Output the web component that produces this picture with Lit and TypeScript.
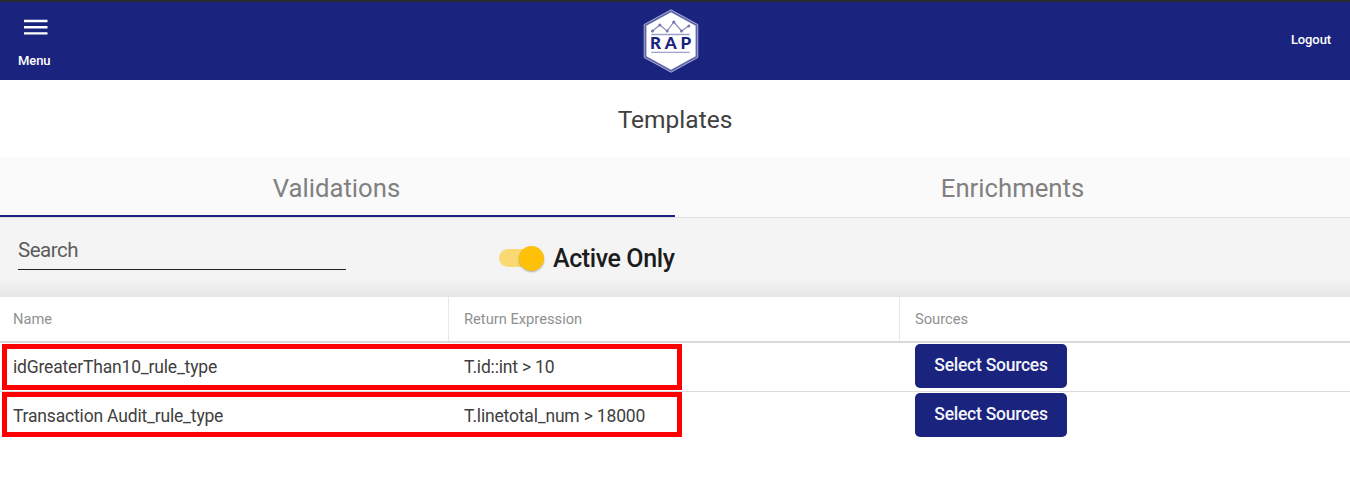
import { LitElement, html, css } from "lit";
import { customElement, state } from "lit/decorators.js";

interface Template {
  name: string;
  expression: string;
}

@customElement("rap-logo")
class RapLogo extends LitElement {
  static styles = css`
    :host { display: block; }
    svg { display: block; }
    .word {
      font-family: Lato, "Liberation Sans", sans-serif;
      font-size: 17px;
      font-weight: 900;
      fill: #1a237e;
    }
  `;

  render() {
    return html`
      <svg width="56" height="64" viewBox="0 0 56 64" role="img" aria-label="RAP">
        <path d="M28 .8 54.8 15.5V48.5L28 63.2 1.2 48.5V15.5Z" fill="#5f66aa" stroke="#a9aed6" stroke-width="1" stroke-linejoin="round" />
        <path d="M28 3.2 52.6 16.7V47.3L28 60.8 3.4 47.3V16.7Z" fill="#fff" />
        <g fill="none" stroke="#8589b9" stroke-width="1.2">
          <path d="M9.5 22 16.8 16 24.2 22 30.8 13 38.5 22 45.8 17" />
          <path d="M8.3 25.5H46.7M8.3 43.4H46.7" stroke="#9ea2c8" stroke-width="1.3" />
        </g>
        <g fill="#7377ae">
          <circle cx="9.5" cy="22" r="1.5" />
          <circle cx="16.8" cy="16" r="1.5" />
          <circle cx="24.2" cy="22" r="1.5" />
          <circle cx="30.8" cy="13" r="1.6" />
          <circle cx="38.5" cy="22" r="1.5" />
          <circle cx="45.8" cy="17" r="1.5" />
        </g>
        <text class="word" y="40.2"><tspan x="7">R</tspan><tspan x="21.7">A</tspan><tspan x="37.4">P</tspan></text>
      </svg>
    `;
  }
}

@customElement("app-root")
class AppRoot extends LitElement {
  static styles = css`
    :host {
      display: block;
      height: 502px;
      overflow: hidden;
      background: #fff;
      color: #404040;
      font-family: Roboto, "Liberation Sans", sans-serif;
    }
    * { box-sizing: border-box; }
    button { font-family: inherit; border: 0; margin: 0; padding: 0; background: none; cursor: pointer; }
    .bar {
      height: 80px;
      display: grid;
      grid-template-columns: 1fr auto 1fr;
      align-items: start;
      background: #1a237e;
      border-top: 2px solid #2b2b30;
      color: #fff;
    }
    .menu {
      justify-self: start;
      display: flex;
      flex-direction: column;
      padding: 17px 0 0 18px;
      color: #fff;
      font-size: 13px;
      font-weight: 500;
      line-height: 16px;
      letter-spacing: -0.1px;
      text-align: left;
    }
    .menu svg { display: block; margin: 0 0 17px 6px; }
    .logo { margin: 7px 8px 0 0; }
    .logout {
      justify-self: end;
      padding: 30px 19px 0 0;
      color: #fff;
      font-size: 13px;
      font-weight: 500;
      line-height: 16px;
      letter-spacing: -0.1px;
    }
    .title {
      margin: 0;
      height: 78px;
      line-height: 80px;
      text-align: center;
      font-size: 24.5px;
      font-weight: 400;
    }
    .tabs {
      display: grid;
      grid-template-columns: 1fr 1fr;
      height: 60px;
      background: #fafafa;
      border-bottom: 1px solid #e0e0e0;
    }
    .tab {
      height: 59px;
      color: #808080;
      font-size: 25.7px;
      line-height: 60px;
      border-bottom: 2px solid transparent;
    }
    .tab.active { border-bottom-color: #1a237e; padding-right: 2px; }
    .filters {
      height: 79px;
      display: flex;
      background: linear-gradient(#f4f4f4 0 76%, #e6e6e6);
    }
    .search {
      width: 328px;
      height: 52px;
      margin-left: 18px;
      border-bottom: 1px solid #222;
      color: #5c5c5c;
      font-size: 20.5px;
      line-height: 64px;
      letter-spacing: -0.5px;
    }
    .toggle {
      display: flex;
      align-items: center;
      height: 80px;
      margin-left: 153px;
      gap: 9px;
      color: #1c1c1c;
      font-size: 25px;
      font-weight: 500;
      letter-spacing: -0.4px;
    }
    .track {
      width: 45px;
      height: 18px;
      display: flex;
      align-items: center;
      justify-content: flex-end;
      border-radius: 9px;
      background: #fad973;
    }
    .thumb {
      width: 25px;
      height: 25px;
      border-radius: 50%;
      background: #ffc107;
      box-shadow: 0 1px 2px rgba(0, 0, 0, 0.3);
    }
    .row { display: grid; grid-template-columns: 449px 451px 1fr; position: relative; }
    .head {
      height: 46px;
      border-bottom: 2px solid #d9d9d9;
      color: #909090;
      font-size: 14.7px;
      line-height: 44px;
    }
    .cell { padding-left: 15px; }
    .cell:first-child { padding-left: 13px; }
    .head .cell { border-right: 1px solid #e8e8e8; }
    .head .cell:last-child { border-right: 0; }
    .item { height: 49px; border-bottom: 1px solid #dcdcdc; font-size: 17.5px; line-height: 48px; letter-spacing: -0.18px; }
    .item:last-child { border-bottom-color: transparent; }
    .select {
      display: block;
      width: 152px;
      height: 44px;
      margin-top: 1px;
      padding-bottom: 1px;
      border-radius: 5px;
      background: #1a237e;
      color: #f4f4fa;
      font-size: 17.5px;
      font-weight: 500;
      letter-spacing: -0.25px;
      line-height: 41px;
    }
    .mark {
      position: absolute;
      left: 2px;
      top: 1px;
      width: 680px;
      height: 46px;
      border: 5px solid #f00;
      pointer-events: none;
    }
    .item:last-child .mark { top: 0; height: 45px; }
  `;

  @state() private tab = "Validations";

  private templates: Template[] = [
    { name: "idGreaterThan10_rule_type", expression: "T.id::int > 10" },
    { name: "Transaction Audit_rule_type", expression: "T.linetotal_num > 18000" },
  ];

  render() {
    return html`
      <header class="bar">
        <button class="menu">
          <svg width="24" height="17" viewBox="0 0 24 17" fill="#fff">
            <path d="M0 .8H23.5V3.2H0ZM0 7.1H23.5V9.4H0ZM0 13.2H23.5V15.6H0Z" />
          </svg>
          <span>Menu</span>
        </button>
        <rap-logo class="logo"></rap-logo>
        <button class="logout">Logout</button>
      </header>
      <h1 class="title">Templates</h1>
      <nav class="tabs">
        ${["Validations", "Enrichments"].map(
          (t) => html`<button class="tab ${t === this.tab ? "active" : ""}" @click=${() => (this.tab = t)}>${t}</button>`
        )}
      </nav>
      <section class="filters">
        <div class="search">Search</div>
        <div class="toggle"><span class="track"><span class="thumb"></span></span><span>Active Only</span></div>
      </section>
      <div class="row head">
        <div class="cell">Name</div>
        <div class="cell">Return Expression</div>
        <div class="cell">Sources</div>
      </div>
      <div class="items">
        ${this.templates.map(
          (t) => html`
            <div class="row item">
              <div class="cell">${t.name}</div>
              <div class="cell">${t.expression}</div>
              <div class="cell"><button class="select">Select Sources</button></div>
              <span class="mark"></span>
            </div>
          `
        )}
      </div>
    `;
  }
}
